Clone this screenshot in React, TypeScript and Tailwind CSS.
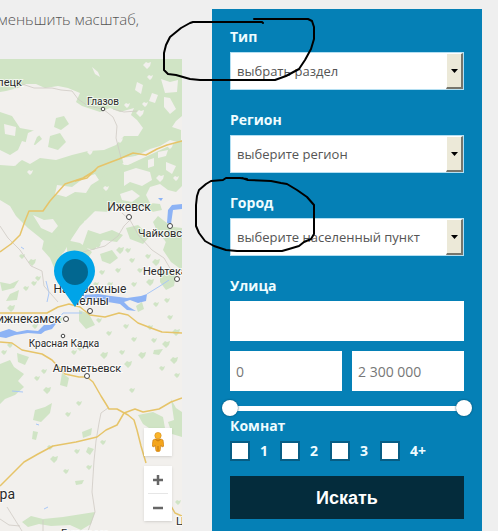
import React from 'react';

const WOODS = [
  'M0 59H182V116L176 121L172 127L181 130V143L170 140L160 146L150 149L138 155L128 159L122 164L132 166L133 172L122 172L116 178L108 184L112 192L126 190L120 199L104 202L94 212L80 226L72 238L64 252L57 258L50 246L38 236L28 228L16 216L10 206L0 200V165L14 166L22 160L30 164L40 158L56 160L72 155L88 151L104 150L116 145L124 136L138 136L143 128L137 120L131 115L134 108L120 112L110 108L100 112L82 106L76 102L80 93L68 88L58 86L45 88L36 84L26 84L18 88L6 91L0 92Z',
  'M0 112L12 116L20 128L36 131L42 139L35 145L22 141L18 150L10 155L0 150Z',
  'M56 118L64 116L69 124L61 130L54 127Z',
  'M50 136L60 133L66 142L58 150L48 147Z',
  'M100 178L182 140V186L176 192L168 190L160 184L150 187L146 195L150 203L160 204L162 210L152 212L140 206L132 210L124 204L112 206L104 200Z',
  'M153 222L158 216L163 220L171 226L170 248L163 238L157 231Z',
  'M166 226L182 228V270L171 262L163 250L168 236Z',
  'M126 228L138 225L150 236L143 244L130 239Z',
  'M79 194L91 190L102 199L119 201L110 212L92 211L76 226L70 239L62 243L56 236L62 222L69 212Z',
  'M88 230L100 234L112 230L123 235L117 242L103 240L94 250L82 247Z',
  'M44 240L54 244L60 252L66 260L64 276L56 272L50 258L42 249Z',
  'M66 240L80 243L92 252L88 258L76 254L68 258Z',
  'M100 254L112 250L118 258L110 264L102 261Z',
  'M160 270L176 274L174 286L166 290L160 282Z',
  'M79 310L89 314L95 325L86 329L79 321Z',
  'M0 282L10 284L19 280L14 288L2 291Z',
  'M10 294L19 290L17 300L6 301Z',
  'M0 364L10 360L14 367L24 374L18 381L24 387L15 395L5 399L0 404Z',
  'M17 353L29 357L25 365L18 362Z',
  'M62 373L69 378L67 387L60 385Z',
  'M35 410L45 407L52 403L50 413L41 422L33 420Z',
  'M33 431L38 432L36 440L32 439Z',
  'M82 432L92 428L91 435L83 438Z',
  'M138 415L153 412L163 417L165 428L155 432L143 424Z',
  'M171 399L176 408L182 412V437L172 434L168 422L174 420Z',
  'M22 522L31 516L43 519L63 517L82 514L95 512L91 524L81 530L70 525L51 526L39 524L28 527Z',
  'M88 447L94 449L90 455L86 452Z',
  'M75 481L84 480L82 484L76 485Z',
  'M154 350L163 349L159 355L153 354Z',
  'M136 306L142 302L144 309L138 312Z',
];

const CLEARINGS = [
  'M92 67L98 72L100 77L95 74Z',
  'M137 82L143 85L141 94L135 90Z',
  'M161 79L170 82L178 80L177 92L165 93Z',
  'M152 93L158 95L155 103L149 101Z',
  'M164 97L170 98L176 109L170 114L164 107Z',
  'M31 95L38 92L45 98L36 101Z',
  'M84 178L95 174L99 180L91 185L86 193L75 192L66 197L55 194L57 185L72 187Z',
  'M0 97L14 99L28 107L25 115L11 111L0 107Z',
  'M47 103L56 108L73 109L71 115L55 114Z',
  'M69 122L82 120L88 127L81 137L71 135Z',
  'M87 113L107 116L120 120L117 134L107 143L92 145L89 134L96 127Z',
  'M28 133L39 128L44 132L37 137L32 149L25 145Z',
  'M4 124L16 127L15 136L5 134Z',
  'M33 215L44 220L53 219L58 226L52 233L41 228Z',
  'M84 221L93 219L97 224L89 228Z',
  'M124 172L136 168L150 172L152 180L142 186L130 182L124 186Z',
  'M120 194L132 190L140 196L132 202L122 200Z',
  'M122 158L136 156L132 163L124 165Z',
  'M158 152L168 150L166 156L158 158Z',
  'M166 162L176 166L172 174L166 170Z',
  'M148 160L154 158L154 166L148 168Z',
];

// x, y, radius of the small patches of forest and of open ground
const SPECKS: [number, number, number][] = [
  [147, 65, 3], [150, 77, 2], [145, 104, 2], [140, 113, 3], [11, 105, 2], [24, 100, 3],
  [30, 172, 2], [73, 130, 3], [90, 152, 2], [170, 146, 2], [127, 105, 2], [120, 140, 2],
  [34, 156, 3], [15, 162, 3], [66, 92, 2], [106, 188, 2], [160, 178, 3], [176, 178, 2],
  [98, 245, 2], [120, 250, 3], [132, 260, 2], [118, 270, 2], [32, 262, 3], [38, 278, 2],
  [128, 250, 2], [148, 256, 2], [156, 262, 3], [88, 268, 2], [102, 272, 2], [140, 270, 2],
  [110, 284, 2], [96, 284, 2], [22, 256, 2], [134, 284, 2], [150, 282, 3], [26, 288, 2],
  [34, 283, 2], [11, 308, 3], [21, 318, 2], [35, 326, 2], [60, 319, 2], [99, 320, 2],
  [109, 333, 2], [126, 326, 2], [134, 339, 2], [150, 327, 2], [170, 317, 2], [176, 332, 3],
  [166, 344, 3], [142, 355, 3], [174, 360, 3], [162, 368, 2], [177, 375, 2], [132, 390, 2],
  [79, 403, 2], [68, 414, 2], [50, 447, 2], [54, 459, 3], [77, 451, 2], [103, 442, 2],
  [89, 467, 2], [66, 471, 2], [178, 502, 2], [44, 371, 2], [37, 378, 2], [47, 390, 3],
  [156, 304, 2], [167, 300, 2], [154, 340, 2], [122, 352, 2], [128, 364, 3], [104, 355, 3],
  [74, 352, 2], [80, 348, 2], [4, 352, 2], [10, 345, 2],
];

const ROADS = [
  'M75 181L87 178L98 167L111 162L119 159L133 153L146 155L157 149L167 145L182 141',
  'M0 252L11 244L20 235L25 221L29 211L43 211L50 201L65 184L83 178L96 170',
  'M0 313H35L47 313L58 307L69 304L80 307L90 315L105 317L119 313L128 315L138 323L151 328L162 332L182 333',
  'M0 342L12 343L22 350L42 354L52 360L65 374L79 377L87 377L93 382L101 396L106 404L109 409L117 409L128 415L134 420L137 430L141 446L146 463',
  'M0 486L12 474L24 462L38 454L53 446L76 442L97 437L106 430L117 425L124 413L135 409L143 412L159 409L171 402L182 398',
  'M171 506L175 513L182 516',
];

const MINOR_ROADS = [
  'M22 84L34 88L52 88L61 90L72 91L78 99L88 106L103 109L113 117L117 126L116 138L121 158',
  'M113 109L124 112L137 111',
  'M0 226L8 238L20 250L31 266L42 271L44 286L58 302',
  'M83 252L105 246L118 236L124 226L130 220L122 213M130 220L139 236L152 250L164 258L171 270',
  'M108 408L101 413L99 423L96 441L94 461L92 492L95 512L88 531',
  'M0 519L9 525L20 526M7 507L22 531M43 520V531',
];

const CITIES: { name: string; x: number; y: number; size: number; anchor?: 'end' | 'middle'; dot?: [number, number] }[] = [
  { name: 'Липецк', x: 22, y: 86, size: 11, anchor: 'end' },
  { name: 'Глазов', x: 103, y: 105, size: 10, anchor: 'middle', dot: [103, 109] },
  { name: 'Ижевск', x: 129, y: 211, size: 12, anchor: 'middle', dot: [129, 217] },
  { name: 'Чайковский', x: 138, y: 237, size: 11, dot: [170, 226] },
  { name: 'Нефтекамск', x: 143, y: 275, size: 11, dot: [177, 279] },
  { name: 'Набережные', x: 90, y: 293, size: 12, anchor: 'middle' },
  { name: 'Челны', x: 90, y: 305, size: 12, anchor: 'middle', dot: [90, 311] },
  { name: 'Нижнекамск', x: 61, y: 323, size: 12, anchor: 'end', dot: [66, 319] },
  { name: 'Красная Кадка', x: 64, y: 347, size: 10, anchor: 'middle', dot: [63, 336] },
  { name: 'Альметьевск', x: 87, y: 372, size: 11, anchor: 'middle', dot: [87, 376] },
  { name: 'Самара', x: 15, y: 499, size: 14, anchor: 'end' },
  { name: 'Бугульма', x: 85, y: 537, size: 11, anchor: 'middle' },
  { name: 'Ц', x: 176, y: 525, size: 11 },
];

function MapCanvas() {
  return (
    <svg viewBox="0 59 182 472" preserveAspectRatio="xMidYMid slice" className="block h-full w-full" role="img" aria-label="Карта">
      <rect x="-400" y="59" width="1000" height="472" fill="#f2f0ed" />
      <g fill="#d0e4c5">{WOODS.map((d) => <path key={d} d={d} />)}</g>
      <g fill="#f2f0ed">{CLEARINGS.map((d) => <path key={d} d={d} />)}</g>
      {SPECKS.map(([x, y, r]) => (
        <path
          key={`${x}-${y}`}
          d={`M${x - r - 1} ${y}l${r} ${-r}l2 1l${r} ${-1}l-1 ${r + 1}l${-r} ${r}z`}
          fill={y < 200 ? '#f2f0ed' : '#d0e4c5'}
        />
      ))}
      <g fill="#8db3f5">
        <path d="M182 204L172 205L168 210L167 223L171 224L173 210L182 209Z" />
        <path d="M83 295L98 294L111 296L127 298L141 296L147 294L146 301L138 303L130 300L124 302L129 307L136 311L127 310L120 304L108 302L96 299L84 299Z" />
        <path d="M0 332L9 329L17 332L27 330L38 331L44 325L50 325L58 321L52 329L45 331L41 334L28 333L15 335L6 338L0 337Z" />
        <path d="M158 198L163 198L161 201Z" />
      </g>
      <path d="M46 281L49 293L47 302M58 320L63 313H82M147 294L160 286L169 280M12 391L23 392M44 509L48 507M36 424L39 425M21 247L24 249" stroke="#a9c7f7" fill="none" />
      <g fill="none" stroke="#cfcac4" strokeWidth="0.8">{MINOR_ROADS.map((d) => <path key={d} d={d} />)}</g>
      <g fill="none" stroke="#e6c469" strokeWidth="1.5" strokeLinejoin="round">{ROADS.map((d) => <path key={d} d={d} />)}</g>
      <g fontFamily="Roboto, 'Noto Sans', sans-serif" fill="#2b2b2b">
        {CITIES.map((c) => (
          <g key={c.name}>
            <text x={c.x} y={c.y} fontSize={c.size} textAnchor={c.anchor ?? 'start'} stroke="#ffffff" strokeWidth="2" strokeOpacity="0.7" paintOrder="stroke">
              {c.name}
            </text>
            {c.dot && <circle cx={c.dot[0]} cy={c.dot[1]} r={c.size > 10 ? 2.5 : 1.8} fill="#fff" stroke="#444" />}
          </g>
        ))}
      </g>
      <path d="M75 307L61 287Q54 279 54 271A20.500 20.500 0 0 1 95 271Q95 279 88 287Z" fill="#00a4e8" />
      <circle cx="75" cy="272" r="13" fill="#026790" />
    </svg>
  );
}

function Pegman() {
  return (
    <svg viewBox="0 0 12 20" className="h-5 w-3" aria-hidden="true">
      <path d="M3 7L1 8L0 14L2 15L3 13L4 19L6 20L8 19L9 13L10 15L12 14L11 8L9 7Z" fill="#f4a51c" stroke="#c77c12" strokeWidth="0.6" />
      <circle cx="6" cy="3.600" r="3.200" fill="#fbb52a" stroke="#d28a17" strokeWidth="0.6" />
      <path d="M3.500 7.500L6 9L8.500 7.500M6 14V19" stroke="#b86e0c" strokeWidth="0.8" fill="none" />
    </svg>
  );
}

function SelectField({ id, label, value }: { id: string; label: string; value: string }) {
  return (
    <div className="mb-[21px]">
      <label htmlFor={id} className="block h-6 text-sm leading-[18px] font-bold text-[#effcff]">{label}</label>
      <div className="relative">
        <select id={id} className="block h-[38px] w-full appearance-none border border-[#b4dff2] bg-white pt-0.5 pr-5 pl-1.5 text-[13px] text-[#555]">
          <option>{value}</option>
        </select>
        <span className="pointer-events-none absolute inset-y-px right-px flex w-[17px] items-center justify-center border-t border-r-2 border-b-2 border-l border-t-white border-r-[#77756b] border-b-[#77756b] border-l-white bg-[#ece9d8]">
          <svg viewBox="0 0 7 4" className="h-1 w-[7px]" aria-hidden="true"><path d="M0 0H7L3.500 4Z" fill="#000" /></svg>
        </span>
      </div>
    </div>
  );
}

const thumb =
  'pointer-events-none absolute inset-0 m-0 h-4 w-full appearance-none bg-transparent [&::-webkit-slider-thumb]:pointer-events-auto [&::-webkit-slider-thumb]:h-4 [&::-webkit-slider-thumb]:w-4 [&::-webkit-slider-thumb]:appearance-none [&::-webkit-slider-thumb]:rounded-full [&::-webkit-slider-thumb]:bg-white [&::-webkit-slider-thumb]:shadow-[0_0_2px_#033f5c]';

const box = 'h-10 w-full min-w-0 bg-white px-1.5 text-sm text-[#777] placeholder:text-[#777]';

export default function App() {
  return (
    <div className="relative flex h-screen items-start gap-[30px] overflow-hidden bg-[#efefef] pr-4 font-['Open_Sans','Noto_Sans',sans-serif]">
      <main className="flex h-full min-w-0 flex-1 flex-col">
        <p className="flex h-[59px] justify-end pt-[9px] pr-[43px] text-[15px] leading-5 font-light whitespace-nowrap text-[#555]">
          уменьшить масштаб,
        </p>
        <div className="relative min-h-0 flex-1 overflow-hidden">
          <MapCanvas />
          <div className="absolute right-2.5 bottom-2.5 flex w-7 flex-col gap-2.5">
            <button aria-label="Просмотр улиц" className="flex h-7 items-center justify-center bg-white shadow"><Pegman /></button>
            <div className="flex flex-col bg-white shadow">
              <button aria-label="Увеличить" className="flex h-[27px] items-center justify-center">
                <svg viewBox="0 0 10 10" className="size-2.5"><path d="M5 0V10M0 5H10" stroke="#666" strokeWidth="2.500" /></svg>
              </button>
              <hr className="mx-1 border-[#e6e6e6]" />
              <button aria-label="Уменьшить" className="flex h-[27px] items-center justify-center">
                <svg viewBox="0 0 10 10" className="size-2.5"><path d="M0 5H10" stroke="#666" strokeWidth="2.500" /></svg>
              </button>
            </div>
          </div>
        </div>
      </main>

      <form className="mt-[9px] min-h-full w-[270px] shrink-0 bg-[#0580b6] px-[18px] pt-[19px]">
        <SelectField id="type" label="Тип" value="выбрать раздел" />
        <SelectField id="region" label="Регион" value="выберите регион" />
        <SelectField id="city" label="Город" value="выберите населенный пункт" />
        <label htmlFor="street" className="block h-6 text-sm leading-[18px] font-bold text-[#effcff]">Улица</label>
        <input id="street" type="text" className={box} />
        <div className="mt-2.5 flex gap-2.5">
          <input aria-label="Цена от" placeholder="0" className={box} />
          <input aria-label="Цена до" placeholder="2 300 000" className={box} />
        </div>
        <div className="relative -mx-2 mt-[9px] flex h-4 items-center px-2">
          <div className="h-[5px] w-full bg-white" />
          <input type="range" aria-label="Минимальная цена" min="0" max="2300000" defaultValue="0" className={thumb} />
          <input type="range" aria-label="Максимальная цена" min="0" max="2300000" defaultValue="2300000" className={thumb} />
        </div>
        <fieldset>
          <legend className="mb-[5px] h-5 text-sm leading-5 font-bold text-[#effcff]">Комнат</legend>
          <div className="flex">
            {['1', '2', '3', '4+'].map((n) => (
              <label key={n} className="flex w-[50px] items-center gap-2.5 text-sm leading-5 font-bold text-[#effcff]">
                <input type="checkbox" className="size-5 shrink-0 appearance-none border-2 border-[#075d84] bg-white" />
                {n}
              </label>
            ))}
          </div>
        </fieldset>
        <button type="submit" className="mt-[15px] block h-[43px] w-full bg-[#042c3c] font-['Liberation_Sans',sans-serif] text-lg font-bold text-white">
          Искать
        </button>
      </form>

      <svg className="pointer-events-none absolute top-0 left-0 h-[531px] w-[498px]" viewBox="0 0 498 531" fill="none" stroke="#000" strokeWidth="2" strokeLinejoin="round" strokeLinecap="round" aria-hidden="true">
        <path d="M263 23L262 22H193L190 23L181 28L170 37L166 45L164 53V70L168 74L176 75L190 79L200 80H275L286 76L299 69L305 60L311 49L314 39V27L312 21L308 19H254" />
        <path d="M247 179L240 178H226L223 180L211 181L206 184L199 190L197 196L196 205V226L199 233L205 241L214 246L226 250L237 251H282L289 249L299 246L304 242L311 239L314 234V205L307 197L297 190L287 184L281 183L271 181L248 180L242 178" />
      </svg>
    </div>
  );
}
